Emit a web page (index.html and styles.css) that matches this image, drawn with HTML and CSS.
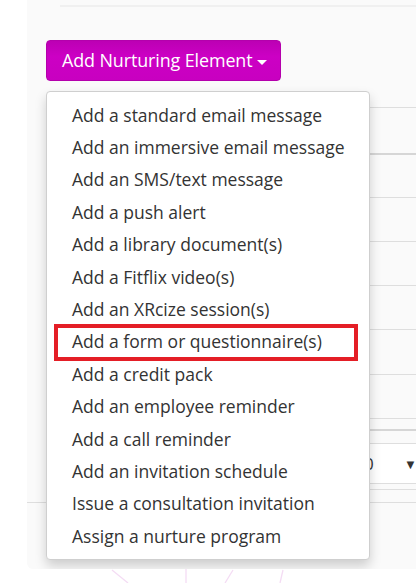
FILE: index.html
```html
<!DOCTYPE html>
<html>
<head>
<meta charset="utf-8">
<link rel="stylesheet" href="styles.css">
</head>
<body>
<div class="panel">
  <div class="topline"></div>
  <div class="btn-wrap">
    <button class="btn">Add Nurturing Element <span class="caret"></span></button>
    <ul class="menu">
      <li>Add a standard email message</li>
      <li>Add an immersive email message</li>
      <li>Add an SMS/text message</li>
      <li>Add a push alert</li>
      <li>Add a library document(s)</li>
      <li>Add a Fitflix video(s)</li>
      <li>Add an XRcize session(s)</li>
      <li class="marked">Add a form or questionnaire(s)<span class="callout"></span></li>
      <li>Add a credit pack</li>
      <li>Add an employee reminder</li>
      <li>Add a call reminder</li>
      <li>Add an invitation schedule</li>
      <li>Issue a consultation invitation</li>
      <li>Assign a nurture program</li>
    </ul>
  </div>
  <div class="table">
    <div class="row h46"></div>
    <div class="row dark h44"></div>
    <div class="row h44"></div>
    <div class="row h44"></div>
    <div class="row h44"></div>
    <div class="row h45"></div>
    <div class="row h44"></div>
    <div class="row h11"></div>
    <div class="row dark h14"></div>
    <div class="row select-row"><span class="sel-text">0</span><span class="sel-arrow">▼</span></div>
    <div class="row h6"></div>
    <div class="row h14"></div>
  </div>
  <div class="footer"></div>
</div>
<svg class="watermark" width="416" height="14" viewBox="0 0 416 14">
  <path d="M112 1 L128 14" stroke="#f4dcf4" stroke-width="1.3" fill="none"/>
  <path d="M186 0 L186 14" stroke="#f4dcf4" stroke-width="1.3" fill="none"/>
  <path d="M233 1 L225 14" stroke="#f4dcf4" stroke-width="1.3" fill="none"/>
  <path d="M283 1 L280 14" stroke="#f4dcf4" stroke-width="1.3" fill="none"/>
</svg>
</body>
</html>
```
FILE: styles.css
```css
html, body {
  margin: 0;
  padding: 0;
  background: #ffffff;
  font-family: "Open Sans", "Liberation Sans", sans-serif;
  overflow: hidden;
}
.panel {
  margin-left: 27px;
  height: 569px;
  background: #fafafa;
  border-bottom-left-radius: 6px;
  position: relative;
  overflow: hidden;
}
.topline {
  margin-left: 33px;
  padding-top: 5px;
  border-bottom: 2px solid #f0f0f0;
}
.btn-wrap {
  position: relative;
  margin: 33px 0 0 19px;
  z-index: 2;
}
.btn {
  display: block;
  box-sizing: border-box;
  width: 235px;
  height: 41px;
  margin: 0;
  padding: 0 0 1px 15px;
  text-align: left;
  border: 1px solid #b400ac;
  border-radius: 4px;
  background: linear-gradient(#bc00b4, #cc00c4 40%, #c800c0);
  color: #ffffff;
  font-family: "Open Sans", "Liberation Sans", sans-serif;
  font-size: 17.9px;
  letter-spacing: -0.1px;
}
.caret {
  display: inline-block;
  width: 0;
  height: 0;
  margin-left: 0;
  vertical-align: middle;
  border-top: 5px solid #ffffff;
  border-left: 5px solid transparent;
  border-right: 5px solid transparent;
}
.menu {
  position: absolute;
  top: 51px;
  left: 0;
  width: 324px;
  box-sizing: border-box;
  height: 469px;
  margin: 0;
  padding: 7px 0 7px 0;
  list-style: none;
  background: #ffffff;
  border: 1px solid #cfcfcf;
  border-radius: 4px;
  box-shadow: 0 6px 12px rgba(0, 0, 0, 0.18);
}
.menu li {
  position: relative;
  padding: 3.5px 0 3.5px 25px;
  line-height: 25.4px;
  font-size: 17.5px;
  color: #333333;
  white-space: nowrap;
}
.callout {
  position: absolute;
  left: 7px;
  right: 11px;
  top: -2px;
  bottom: -3px;
  border: 4px solid #e41e26;
}
.table {
  position: absolute;
  top: 107px;
  left: 19px;
  right: 0;
}
.row {
  border-top: 1px solid #dedede;
  box-sizing: border-box;
}
.row.dark {
  border-top: 2px solid #d6d6d6;
}
.h46 { height: 46px; }
.h44 { height: 44px; }
.h45 { height: 45px; }
.h11 { height: 11px; }
.h14 { height: 14px; }
.h6 { height: 6px; }
.select-row {
  height: 40px;
  display: flex;
  align-items: center;
  background: #ffffff;
  position: relative;
}
.sel-text {
  position: absolute;
  left: 318px;
  font-size: 17px;
  color: #333;
}
.sel-arrow {
  position: absolute;
  left: 358px;
  font-size: 13px;
  color: #333;
}
.footer {
  position: absolute;
  top: 502px;
  left: 0;
  right: 0;
  border-top: 1px solid #dedede;
}
.watermark {
  display: block;
}
```
